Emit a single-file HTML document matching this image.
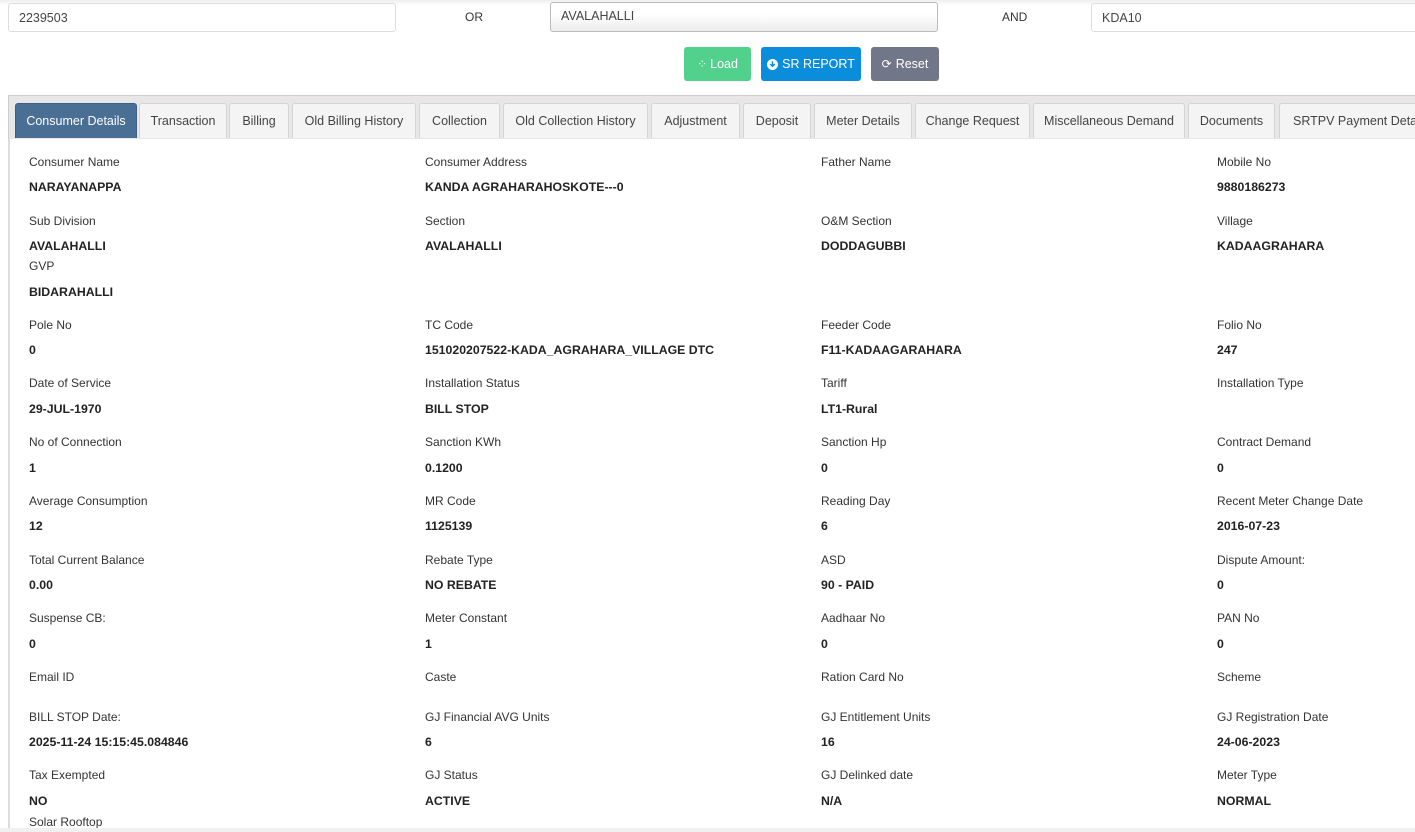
<!DOCTYPE html>
<html><head><meta charset="utf-8"><style>
*{box-sizing:border-box;margin:0;padding:0}
body{width:1415px;height:832px;overflow:hidden;background:#fff;font-family:"Liberation Sans",sans-serif;color:#333;position:relative}
.a{position:absolute;white-space:nowrap}
.inp{position:absolute;border:1px solid #ddd;border-radius:3px;font-size:12.5px;color:#444;padding:7px 10px;height:29px;background:#fff}
.btn{position:absolute;top:47px;height:34px;border-radius:3px;color:#fff;font-size:12.5px;display:flex;align-items:center;justify-content:center;gap:4px}
.tab{position:absolute;top:103px;height:35px;border:1px solid #d4d4d4;border-bottom:none;background:#f4f4f4;border-radius:3px 3px 0 0;font-size:12.5px;color:#444;display:flex;align-items:center;justify-content:center;white-space:nowrap}
.l{position:absolute;font-size:12px;color:#333;white-space:nowrap;margin-top:1px}
.v{position:absolute;font-size:12.3px;font-weight:bold;color:#222;white-space:nowrap;margin-top:1px}
</style></head><body>
<div class="a" style="left:0;top:0;width:1415px;height:5px;background:linear-gradient(#eee,#fff)"></div>
<div class="inp" style="left:8px;top:3px;width:388px">2239503</div>
<div class="a" style="left:465px;top:10px;font-size:12px;color:#333">OR</div>
<div class="inp" style="left:550px;top:2px;width:388px;height:30px;padding-top:6px;background:linear-gradient(#fff 40%,#ececec);border-color:#bbb">AVALAHALLI</div>
<div class="a" style="left:1002px;top:10px;font-size:12px;color:#333">AND</div>
<div class="inp" style="left:1091px;top:3px;width:330px">KDA10</div>

<div class="btn" style="left:684px;width:67px;background:#52d18c"><span style="font-size:12px;letter-spacing:-1px">⁘</span>Load</div>
<div class="btn" style="left:761px;width:100px;background:#0a8ddb"><svg width="11" height="11" viewBox="0 0 12 12"><circle cx="6" cy="6" r="6" fill="#fff"/><path d="M6 2.5v5M3.5 5.5L6 8l2.5-2.5" stroke="#0a8ddb" stroke-width="1.6" fill="none"/></svg>SR REPORT</div>
<div class="btn" style="left:871px;width:68px;background:#717688"><span style="font-size:12px">⟳</span>Reset</div>

<div class="a" style="left:8px;top:95px;width:1410px;height:44px;background:#e8e6e6;border-top:1px solid #ccc;border-left:1px solid #ccc"></div>
<div class="a" style="left:8px;top:139px;width:2px;height:689px;background:#ddd"></div>
<div class="tab" style="left:15px;width:122px;background:#4a6f94;color:#fff;border-color:#3b5f86">Consumer Details</div>
<div class="tab" style="left:139px;width:88px">Transaction</div>
<div class="tab" style="left:229px;width:60px">Billing</div>
<div class="tab" style="left:292px;width:124px">Old Billing History</div>
<div class="tab" style="left:419px;width:81px">Collection</div>
<div class="tab" style="left:503px;width:145px">Old Collection History</div>
<div class="tab" style="left:651px;width:89px">Adjustment</div>
<div class="tab" style="left:743px;width:68px">Deposit</div>
<div class="tab" style="left:814px;width:98px">Meter Details</div>
<div class="tab" style="left:915px;width:115px">Change Request</div>
<div class="tab" style="left:1033px;width:152px">Miscellaneous Demand</div>
<div class="tab" style="left:1188px;width:87px">Documents</div>
<div class="tab" style="left:1279px;width:145px;justify-content:flex-start;padding-left:13px">SRTPV Payment Details</div>

<div class="l" style="left:29px;top:154px">Consumer Name</div><div class="v" style="left:29px;top:179px">NARAYANAPPA</div>
<div class="l" style="left:425px;top:154px">Consumer Address</div><div class="v" style="left:425px;top:179px">KANDA AGRAHARAHOSKOTE---0</div>
<div class="l" style="left:821px;top:154px">Father Name</div>
<div class="l" style="left:1217px;top:154px">Mobile No</div><div class="v" style="left:1217px;top:179px">9880186273</div>
<div class="l" style="left:29px;top:213px">Sub Division</div><div class="v" style="left:29px;top:238px">AVALAHALLI</div>
<div class="l" style="left:425px;top:213px">Section</div><div class="v" style="left:425px;top:238px">AVALAHALLI</div>
<div class="l" style="left:821px;top:213px">O&amp;M Section</div><div class="v" style="left:821px;top:238px">DODDAGUBBI</div>
<div class="l" style="left:1217px;top:213px">Village</div><div class="v" style="left:1217px;top:238px">KADAAGRAHARA</div>
<div class="l" style="left:29px;top:258px">GVP</div><div class="v" style="left:29px;top:284px">BIDARAHALLI</div>
<div class="l" style="left:29px;top:317px">Pole No</div><div class="v" style="left:29px;top:342px">0</div>
<div class="l" style="left:425px;top:317px">TC Code</div><div class="v" style="left:425px;top:342px">151020207522-KADA_AGRAHARA_VILLAGE DTC</div>
<div class="l" style="left:821px;top:317px">Feeder Code</div><div class="v" style="left:821px;top:342px">F11-KADAAGARAHARA</div>
<div class="l" style="left:1217px;top:317px">Folio No</div><div class="v" style="left:1217px;top:342px">247</div>
<div class="l" style="left:29px;top:375px">Date of Service</div><div class="v" style="left:29px;top:401px">29-JUL-1970</div>
<div class="l" style="left:425px;top:375px">Installation Status</div><div class="v" style="left:425px;top:401px">BILL STOP</div>
<div class="l" style="left:821px;top:375px">Tariff</div><div class="v" style="left:821px;top:401px">LT1-Rural</div>
<div class="l" style="left:1217px;top:375px">Installation Type</div>
<div class="l" style="left:29px;top:434px">No of Connection</div><div class="v" style="left:29px;top:460px">1</div>
<div class="l" style="left:425px;top:434px">Sanction KWh</div><div class="v" style="left:425px;top:460px">0.1200</div>
<div class="l" style="left:821px;top:434px">Sanction Hp</div><div class="v" style="left:821px;top:460px">0</div>
<div class="l" style="left:1217px;top:434px">Contract Demand</div><div class="v" style="left:1217px;top:460px">0</div>
<div class="l" style="left:29px;top:493px">Average Consumption</div><div class="v" style="left:29px;top:518px">12</div>
<div class="l" style="left:425px;top:493px">MR Code</div><div class="v" style="left:425px;top:518px">1125139</div>
<div class="l" style="left:821px;top:493px">Reading Day</div><div class="v" style="left:821px;top:518px">6</div>
<div class="l" style="left:1217px;top:493px">Recent Meter Change Date</div><div class="v" style="left:1217px;top:518px">2016-07-23</div>
<div class="l" style="left:29px;top:552px">Total Current Balance</div><div class="v" style="left:29px;top:577px">0.00</div>
<div class="l" style="left:425px;top:552px">Rebate Type</div><div class="v" style="left:425px;top:577px">NO REBATE</div>
<div class="l" style="left:821px;top:552px">ASD</div><div class="v" style="left:821px;top:577px">90 - PAID</div>
<div class="l" style="left:1217px;top:552px">Dispute Amount:</div><div class="v" style="left:1217px;top:577px">0</div>
<div class="l" style="left:29px;top:610px">Suspense CB:</div><div class="v" style="left:29px;top:636px">0</div>
<div class="l" style="left:425px;top:610px">Meter Constant</div><div class="v" style="left:425px;top:636px">1</div>
<div class="l" style="left:821px;top:610px">Aadhaar No</div><div class="v" style="left:821px;top:636px">0</div>
<div class="l" style="left:1217px;top:610px">PAN No</div><div class="v" style="left:1217px;top:636px">0</div>
<div class="l" style="left:29px;top:669px">Email ID</div>
<div class="l" style="left:425px;top:669px">Caste</div>
<div class="l" style="left:821px;top:669px">Ration Card No</div>
<div class="l" style="left:1217px;top:669px">Scheme</div>
<div class="l" style="left:29px;top:709px">BILL STOP Date:</div><div class="v" style="left:29px;top:734px">2025-11-24 15:15:45.084846</div>
<div class="l" style="left:425px;top:709px">GJ Financial AVG Units</div><div class="v" style="left:425px;top:734px">6</div>
<div class="l" style="left:821px;top:709px">GJ Entitlement Units</div><div class="v" style="left:821px;top:734px">16</div>
<div class="l" style="left:1217px;top:709px">GJ Registration Date</div><div class="v" style="left:1217px;top:734px">24-06-2023</div>
<div class="l" style="left:29px;top:767px">Tax Exempted</div><div class="v" style="left:29px;top:793px">NO</div>
<div class="l" style="left:425px;top:767px">GJ Status</div><div class="v" style="left:425px;top:793px">ACTIVE</div>
<div class="l" style="left:821px;top:767px">GJ Delinked date</div><div class="v" style="left:821px;top:793px">N/A</div>
<div class="l" style="left:1217px;top:767px">Meter Type</div><div class="v" style="left:1217px;top:793px">NORMAL</div>
<div class="l" style="left:29px;top:814px">Solar Rooftop</div>
<div class="a" style="left:0;top:828px;width:1415px;height:4px;background:#f0f0f0"></div>
</body></html>
